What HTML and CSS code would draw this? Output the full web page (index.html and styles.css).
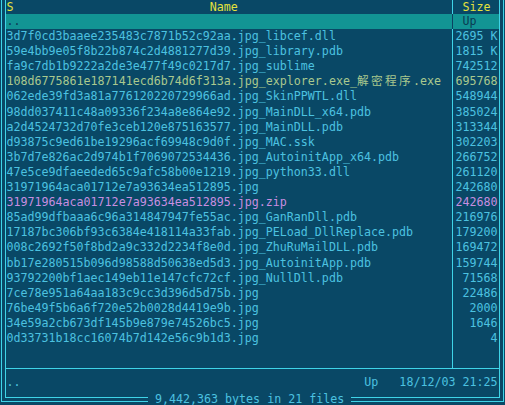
FILE: index.html
```html
<!DOCTYPE html>
<html>
<head>
<meta charset="utf-8">
<link rel="stylesheet" href="styles.css">
</head>
<body>
<div class="frame">
  <div class="inner">
    <div class="list">
      <div class="row head">
        <div class="name"><span>S</span><span class="title">Name</span></div>
        <div class="sep"></div>
        <div class="size">Size</div>
      </div>
      <div class="row cursor"><div class="name">..</div><div class="sep"></div><div class="size">Up</div></div>
      <div class="row"><div class="name">3d7f0cd3baaee235483c7871b52c92aa.jpg_libcef.dll</div><div class="sep"></div><div class="size">2695 K</div></div>
      <div class="row"><div class="name">59e4bb9e05f8b22b874c2d4881277d39.jpg_library.pdb</div><div class="sep"></div><div class="size">1815 K</div></div>
      <div class="row"><div class="name">fa9c7db1b9222a2de3e477f49c0217d7.jpg_sublime</div><div class="sep"></div><div class="size">742512</div></div>
      <div class="row exe"><div class="name">108d6775861e187141ecd6b74d6f313a.jpg_explorer.exe_<span class="cjk">解密程序</span>.exe</div><div class="sep"></div><div class="size">695768</div></div>
      <div class="row"><div class="name">062ede39fd3a81a776120220729966ad.jpg_SkinPPWTL.dll</div><div class="sep"></div><div class="size">548944</div></div>
      <div class="row"><div class="name">98dd037411c48a09336f234a8e864e92.jpg_MainDLL_x64.pdb</div><div class="sep"></div><div class="size">385024</div></div>
      <div class="row"><div class="name">a2d4524732d70fe3ceb120e875163577.jpg_MainDLL.pdb</div><div class="sep"></div><div class="size">313344</div></div>
      <div class="row"><div class="name">d93875c9ed61be19296acf69948c9d0f.jpg_MAC.ssk</div><div class="sep"></div><div class="size">302203</div></div>
      <div class="row"><div class="name">3b7d7e826ac2d974b1f7069072534436.jpg_AutoinitApp_x64.pdb</div><div class="sep"></div><div class="size">266752</div></div>
      <div class="row"><div class="name">47e5ce9dfaeeded65c9afc58b00e1219.jpg_python33.dll</div><div class="sep"></div><div class="size">261120</div></div>
      <div class="row"><div class="name">31971964aca01712e7a93634ea512895.jpg</div><div class="sep"></div><div class="size">242680</div></div>
      <div class="row zip"><div class="name">31971964aca01712e7a93634ea512895.jpg.zip</div><div class="sep"></div><div class="size">242680</div></div>
      <div class="row"><div class="name">85ad99dfbaaa6c96a314847947fe55ac.jpg_GanRanDll.pdb</div><div class="sep"></div><div class="size">216976</div></div>
      <div class="row"><div class="name">17187bc306bf93c6384e418114a33fab.jpg_PELoad_DllReplace.pdb</div><div class="sep"></div><div class="size">179200</div></div>
      <div class="row"><div class="name">008c2692f50f8bd2a9c332d2234f8e0d.jpg_ZhuRuMailDLL.pdb</div><div class="sep"></div><div class="size">169472</div></div>
      <div class="row"><div class="name">bb17e280515b096d98588d50638ed5d3.jpg_AutoinitApp.pdb</div><div class="sep"></div><div class="size">159744</div></div>
      <div class="row"><div class="name">93792200bf1aec149eb11e147cfc72cf.jpg_NullDll.pdb</div><div class="sep"></div><div class="size">71568</div></div>
      <div class="row"><div class="name">7ce78e951a64aa183c9cc3d396d5d75b.jpg</div><div class="sep"></div><div class="size">22486</div></div>
      <div class="row"><div class="name">76be49f5b6a6f720e52b0028d4419e9b.jpg</div><div class="sep"></div><div class="size">2000</div></div>
      <div class="row"><div class="name">34e59a2cb673df145b9e879e74526bc5.jpg</div><div class="sep"></div><div class="size">1646</div></div>
      <div class="row"><div class="name">0d33731b18cc16074b7d142e56c9b1d3.jpg</div><div class="sep"></div><div class="size">4</div></div>
    </div>
    <div class="status"><span>..</span><span>Up   18/12/03 21:25</span></div>
  </div>
  <div class="total"> 9,442,363 bytes in 21 files </div>
</div>
</body>
</html>
```
FILE: styles.css
```css
html, body {
  margin: 0;
  background: #094866;
}
body {
  width: 505px;
  height: 405px;
  overflow: hidden;
  font-family: "DejaVu Sans Mono", "Noto Sans CJK SC", monospace;
  font-size: 11.65px;
  color: #4cc2e0;
}
.frame {
  position: relative;
  margin: 0 1px;
  height: 401px;
  border: 1px solid #3fd4e8;
  border-top: none;
}
.inner {
  margin: 0 3px 3px;
  height: 397px;
  border: 1px solid #3fd4e8;
  border-top: none;
  display: flex;
  flex-direction: column;
}
.list {
  height: 368px;
  flex: none;
  background: linear-gradient(to right, transparent 446px, #3fd4e8 446px, #3fd4e8 447px, transparent 447px);
}
.row {
  display: grid;
  grid-template-columns: 442px 7px 44px;
  height: 15.1px;
  line-height: 15.1px;
  white-space: pre;
}
.name {
  padding-left: 0.5px;
  min-width: 0;
}
.size {
  text-align: right;
  padding-right: 1.5px;
}
.head {
  height: 14px;
  line-height: 14px;
  color: #e4e23c;
}
.head .size,
.cursor .size {
  text-align: left;
  padding-left: 7.4px;
  padding-right: 0;
}
.title {
  margin-left: 28ch;
}
.cursor {
  background: #129494;
  color: #0b3a52;
}
.cursor .sep {
  background: linear-gradient(to right, transparent 4px, #0b4262 4px, #0b4262 5px, transparent 5px);
}
.exe {
  color: #a9c98e;
}
.zip {
  color: #c88ee0;
}
.cjk {
  font-family: "Noto Sans CJK SC", sans-serif;
  letter-spacing: 2.35px;
  line-height: 1;
}
.status {
  flex: 1;
  border-top: 1px solid #3fd4e8;
  display: flex;
  justify-content: space-between;
  padding: 6px 1.5px 0 0.5px;
  line-height: 15px;
  white-space: pre;
}
.total {
  position: absolute;
  left: 146px;
  top: 391.5px;
  line-height: 15px;
  background: #094866;
  white-space: pre;
}
```
